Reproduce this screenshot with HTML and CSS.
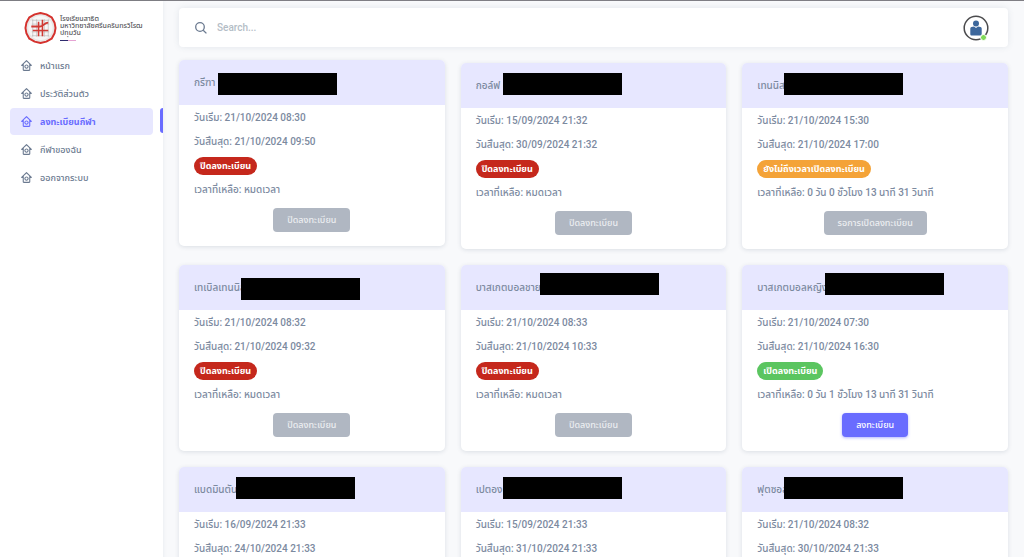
FILE: index.html
```
<!DOCTYPE html>
<html lang="th">
<head>
    <meta charset="UTF-8">
    <meta name="viewport" content="width=device-width, initial-scale=1.0">
    <title>ลงทะเบียนกีฬา</title>
    <link rel="stylesheet" href="styles.css">
</head>
<body>
    <!-- Shared icons -->
    <svg class="sprite" aria-hidden="true">
        <symbol id="icon-home" viewBox="0 0 24 24">
            <path d="M3 13h2v7c0 1.1.9 2 2 2h10c1.1 0 2-.9 2-2v-7h2c.9 0 1.3-1 .7-1.7l-9-9a1 1 0 0 0-1.4 0l-9 9C1.700 12 2.100 13 3 13zm9-8.600l5 5V20H7V9.400l5-5z"/>
            <path d="M12 18c2.200 0 4-1.800 4-4s-1.800-4-4-4-4 1.800-4 4 1.800 4 4 4zm0-6c1.100 0 2 .9 2 2s-.9 2-2 2-2-.9-2-2 .9-2 2-2z"/>
        </symbol>
    </svg>

    <div class="layout">
        <!-- Sidebar -->
        <aside class="sidebar">
            <a class="brand" href="#">
                <svg class="brand-logo" viewBox="0 0 34 34" aria-hidden="true">
                    <path d="M17 1.500l6 1.500 5.500 3 3 5.500L32.500 17l-1 5.500-3 5.500-5.500 3-6 1.500-6-1.500-5.500-3-3-5.500L1.500 17l1-5.500 3-5.500L11 3z" fill="#e9e6e6" stroke="#d5322e" stroke-width="2" stroke-linejoin="round"/>
                    <circle cx="17" cy="17" r="12.500" fill="#f7f6f6"/>
                    <path d="M9 8v18M13 8v18M21 8v18M25 8v18M8 9h18M8 13h18M8 21h18M8 25h18" stroke="#b5b1b1" stroke-width=".6" fill="none"/>
                    <path d="M15 10.500v15M19 8.500v17M9 19.500h16" stroke="#d03a34" stroke-width="1.600" fill="none"/>
                    <path d="M7.500 15.500h9c4 0 4-4 8.500-4" stroke="#d03a34" stroke-width="1.900" fill="none"/>
                </svg>
                <span class="brand-text">โรงเรียนสาธิต<br>มหาวิทยาลัยศรีนครินทรวิโรฒ<br>ปทุมวัน</span>
            </a>
            <ul class="menu">
                <li><a href="#"><svg><use href="#icon-home"/></svg>หน้าแรก</a></li>
                <li><a href="#"><svg><use href="#icon-home"/></svg>ประวัติส่วนตัว</a></li>
                <li class="active"><a href="#"><svg><use href="#icon-home"/></svg>ลงทะเบียนกีฬา</a></li>
                <li><a href="#"><svg><use href="#icon-home"/></svg>กีฬาของฉัน</a></li>
                <li><a href="#"><svg><use href="#icon-home"/></svg>ออกจากระบบ</a></li>
            </ul>
        </aside>

        <main class="content">
            <!-- Navbar -->
            <nav class="navbar">
                <label class="search">
                    <svg viewBox="0 0 12 12" aria-hidden="true"><circle cx="5" cy="5" r="4.300"/><path d="M8.200 8.200l3.200 3.200"/></svg>
                    <input type="text" placeholder="Search..." aria-label="Search">
                </label>
                <button class="avatar" type="button" aria-label="Profile">
                    <svg viewBox="0 0 26 26" aria-hidden="true">
                        <circle cx="13" cy="13" r="11.800" fill="#fff" stroke="#4b4b4d" stroke-width="1.500"/>
                        <circle cx="13" cy="8.500" r="3" fill="#3c679c"/>
                        <path d="M8.500 12l2.500-.4 2 1.400 2-1.400 2.500.4c.8.2 1.200.7 1.200 1.500v5.500c0 1-.5 1.500-1.500 1.500H8.800c-1 0-1.500-.5-1.500-1.500v-5.500c0-.8.400-1.300 1.200-1.500z" fill="#3c679c"/>
                    </svg>
                    <span class="online"></span>
                </button>
            </nav>

            <!-- Sports -->
            <div class="sports">
                <section class="card raised">
                    <h2 class="card-title">กรีฑา<span class="mask mask-athletics"></span></h2>
                    <div class="card-body">
                        <p>วันเริ่ม: 21/10/2024 08:30</p>
                        <p>วันสิ้นสุด: 21/10/2024 09:50</p>
                        <p><span class="badge closed">ปิดลงทะเบียน</span></p>
                        <p>เวลาที่เหลือ: หมดเวลา</p>
                        <button class="btn" type="button" disabled>ปิดลงทะเบียน</button>
                    </div>
                </section>
                <section class="card">
                    <h2 class="card-title">กอล์ฟ (<span class="mask mask-golf"></span></h2>
                    <div class="card-body">
                        <p>วันเริ่ม: 15/09/2024 21:32</p>
                        <p>วันสิ้นสุด: 30/09/2024 21:32</p>
                        <p><span class="badge closed">ปิดลงทะเบียน</span></p>
                        <p>เวลาที่เหลือ: หมดเวลา</p>
                        <button class="btn" type="button" disabled>ปิดลงทะเบียน</button>
                    </div>
                </section>
                <section class="card">
                    <h2 class="card-title">เทนนิส<span class="mask mask-tennis"></span></h2>
                    <div class="card-body">
                        <p>วันเริ่ม: 21/10/2024 15:30</p>
                        <p>วันสิ้นสุด: 21/10/2024 17:00</p>
                        <p><span class="badge waiting">ยังไม่ถึงเวลาเปิดลงทะเบียน</span></p>
                        <p>เวลาที่เหลือ: 0 วัน 0 ชั่วโมง 13 นาที 31 วินาที</p>
                        <button class="btn" type="button" disabled>รอการเปิดลงทะเบียน</button>
                    </div>
                </section>
                <section class="card">
                    <h2 class="card-title">เทเบิลเทนนิส<span class="mask mask-table-tennis"></span></h2>
                    <div class="card-body">
                        <p>วันเริ่ม: 21/10/2024 08:32</p>
                        <p>วันสิ้นสุด: 21/10/2024 09:32</p>
                        <p><span class="badge closed">ปิดลงทะเบียน</span></p>
                        <p>เวลาที่เหลือ: หมดเวลา</p>
                        <button class="btn" type="button" disabled>ปิดลงทะเบียน</button>
                    </div>
                </section>
                <section class="card">
                    <h2 class="card-title">บาสเกตบอลชาย<span class="mask mask-basket-men"></span></h2>
                    <div class="card-body">
                        <p>วันเริ่ม: 21/10/2024 08:33</p>
                        <p>วันสิ้นสุด: 21/10/2024 10:33</p>
                        <p><span class="badge closed">ปิดลงทะเบียน</span></p>
                        <p>เวลาที่เหลือ: หมดเวลา</p>
                        <button class="btn" type="button" disabled>ปิดลงทะเบียน</button>
                    </div>
                </section>
                <section class="card">
                    <h2 class="card-title">บาสเกตบอลหญิง<span class="mask mask-basket-women"></span></h2>
                    <div class="card-body">
                        <p>วันเริ่ม: 21/10/2024 07:30</p>
                        <p>วันสิ้นสุด: 21/10/2024 16:30</p>
                        <p><span class="badge open">เปิดลงทะเบียน</span></p>
                        <p>เวลาที่เหลือ: 0 วัน 1 ชั่วโมง 13 นาที 31 วินาที</p>
                        <button class="btn btn-primary" type="button">ลงทะเบียน</button>
                    </div>
                </section>
                <section class="card">
                    <h2 class="card-title">แบดมินตัน<span class="mask mask-badminton"></span></h2>
                    <div class="card-body">
                        <p>วันเริ่ม: 16/09/2024 21:33</p>
                        <p>วันสิ้นสุด: 24/10/2024 21:33</p>
                    </div>
                </section>
                <section class="card">
                    <h2 class="card-title">เปตอง<span class="mask mask-petanque"></span></h2>
                    <div class="card-body">
                        <p>วันเริ่ม: 15/09/2024 21:33</p>
                        <p>วันสิ้นสุด: 31/10/2024 21:33</p>
                    </div>
                </section>
                <section class="card">
                    <h2 class="card-title">ฟุตซอล<span class="mask mask-futsal"></span></h2>
                    <div class="card-body">
                        <p>วันเริ่ม: 21/10/2024 08:32</p>
                        <p>วันสิ้นสุด: 30/10/2024 21:33</p>
                    </div>
                </section>
            </div>
        </main>
    </div>
</body>
</html>
```
FILE: styles.css
```
* {
    box-sizing: border-box;
}

body {
    margin: 0;
    font-family: Roboto, "Noto Sans Thai", sans-serif;
    font-size: 10px;
    font-weight: 500;
    line-height: 16px;
    color: #7c8a9f;
    background: #f8f9fb;
    height: 100vh;
    overflow: hidden;
}

.sprite {
    display: none;
}

.layout {
    display: flex;
    min-height: 100vh;
    border-top: 1px solid #7f7e84;
}

/* Sidebar */
.sidebar {
    width: 163px;
    flex-shrink: 0;
    padding-top: 10px;
    background: #fff;
    box-shadow: 0 0 4px rgba(100, 116, 139, 0.12);
}

.brand {
    display: flex;
    gap: 3px;
    height: 41px;
    padding-left: 24px;
    color: #55565a;
    text-decoration: none;
}

.brand-logo {
    width: 33px;
    height: 34px;
    flex-shrink: 0;
}

.brand-text {
    padding-top: 5px;
    font-size: 7px;
    line-height: 7px;
    white-space: nowrap;
}

.brand-text::after {
    content: "";
    display: block;
    width: 16px;
    height: 1px;
    margin-top: 3px;
    background: linear-gradient(to right, #2f2c6e 50%, #e5a3d3 50%);
}

.menu {
    display: flex;
    flex-direction: column;
    gap: 1px;
    margin: 0;
    padding: 0 10px;
    font-size: 9px;
    list-style: none;
}

.menu li {
    position: relative;
}

.menu a {
    display: flex;
    align-items: center;
    gap: 7px;
    height: 27px;
    padding-left: 10px;
    border-radius: 4px;
    color: #6b7a90;
    text-decoration: none;
}

.menu svg {
    width: 13px;
    height: 13px;
    fill: currentColor;
}

.menu .active a {
    background: #e7e7ff;
    color: #696cff;
    font-weight: bold;
}

.menu .active::after {
    content: "";
    position: absolute;
    top: 0;
    right: -10px;
    width: 3px;
    height: 25px;
    border-radius: 3px 0 0 3px;
    background: #696cff;
}

/* Main column */
.content {
    flex: 1;
    min-width: 0;
    padding: 7px 16px 16px;
}

.navbar {
    display: flex;
    align-items: center;
    justify-content: space-between;
    height: 39px;
    padding: 0 19px 0 16px;
    border-radius: 4px;
    background: #fff;
    box-shadow: 0 0 6px rgba(67, 89, 113, 0.12);
}

.search {
    display: flex;
    align-items: center;
    flex: 1;
    gap: 10px;
}

.search svg {
    width: 12px;
    height: 12px;
    fill: none;
    stroke: #6b7a90;
    stroke-width: 1.3;
}

.search input {
    flex: 1;
    padding: 0;
    border: 0;
    outline: none;
    background: none;
    font: inherit;
    color: inherit;
}

.search input::placeholder {
    color: #b4bdc6;
}

.avatar {
    position: relative;
    width: 26px;
    height: 26px;
    padding: 0;
    border: 0;
    background: none;
}

.avatar svg {
    display: block;
}

.online {
    position: absolute;
    right: 2px;
    bottom: 0;
    width: 7px;
    height: 7px;
    border: 1px solid #fff;
    border-radius: 50%;
    background: #7fd957;
}

/* Cards */
.sports {
    display: grid;
    grid-template-columns: repeat(3, 1fr);
    gap: 16px;
    margin-top: 16px;
}

.card {
    border-radius: 5px;
    background: #fff;
    box-shadow: 0 1px 4px rgba(67, 89, 113, 0.16);
}

.raised {
    transform: translateY(-3px);
}

.card-title {
    position: relative;
    display: flex;
    align-items: center;
    height: 45px;
    margin: 0;
    padding: 0 15px;
    border-radius: 5px 5px 0 0;
    background: #e7e7ff;
    font-size: 10px;
    font-weight: 500;
    white-space: pre;
}

.mask {
    position: absolute;
    top: 10px;
    left: 42px;
    width: 119px;
    height: 22px;
    background: #000;
}

.mask-athletics {
    top: 13px;
    left: 39px;
}

.mask-table-tennis {
    top: 13px;
    left: 62px;
}

.mask-basket-men {
    top: 8px;
    left: 79px;
}

.mask-basket-women {
    top: 8px;
    left: 83px;
}

.mask-badminton {
    left: 57px;
}

.card-body {
    display: flex;
    flex-direction: column;
    gap: 8px;
    padding: 5px 15px 14px;
}

.card-body p {
    display: flex;
    align-items: center;
    height: 16px;
    margin: 0;
    white-space: nowrap;
}

.badge {
    padding: 0 6px;
    border-radius: 9px;
    font-size: 9px;
    line-height: 18px;
    color: #fff;
    font-weight: bold;
}

.closed {
    background: #c5281c;
}

.waiting {
    background: #f4a338;
}

.open {
    background: #5bc560;
}

.btn {
    align-self: center;
    height: 24px;
    margin-top: 2px;
    padding: 0 14px;
    border: 0;
    border-radius: 4px;
    background: #b0b7c2;
    color: #eceef1;
    font: inherit;
    font-size: 9px;
}

.btn-primary {
    background: #696cff;
    color: #fff;
    box-shadow: 0 1px 3px rgba(105, 108, 255, 0.5);
}
```
